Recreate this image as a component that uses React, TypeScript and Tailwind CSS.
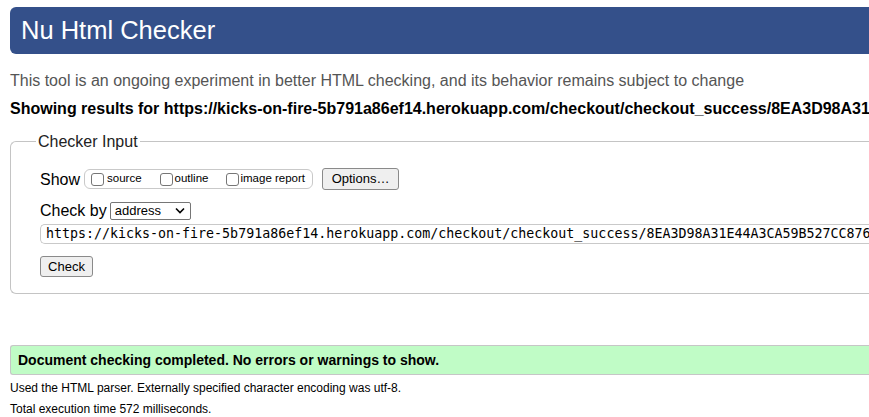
const url =
  "https://kicks-on-fire-5b791a86ef14.herokuapp.com/checkout/checkout_success/8EA3D98A31E44A3CA59B527CC8762F1D";

export default function App() {
  return (
    <div className="h-[417px] w-[869px] overflow-hidden bg-white font-['Liberation_Sans',Arial,sans-serif] text-black">
      <div className="w-[1200px] pl-[10px] pt-[7px]">
        <h1 className="flex h-[47px] items-center rounded-l-[6px] bg-[#34508a] pl-[11px] text-[25.5px] text-white">
          Nu Html Checker
        </h1>

        <p className="mt-[17px] text-[16px] leading-[19px] text-[#555]">
          This tool is an ongoing experiment in better HTML checking, and its behavior remains
          subject to change
        </p>
        <p className="mt-[9px] whitespace-nowrap text-[16px] font-bold leading-[19px]">
          Showing results for {url}
        </p>

        <fieldset className="mt-[14px] rounded-l-[6px] border border-r-0 border-[#c4c4c4] pb-[16px] pl-[29px] pt-[17px]">
          <legend className="-ml-[4px] px-[2px] text-[16px] leading-[19px] text-[#222]">
            Checker Input
          </legend>

          <div className="flex h-[22px] items-center">
            <span className="text-[16px] leading-[19px]">Show</span>
            <div className="ml-[4px] flex h-[20px] w-[229px] items-center rounded-[6px] border border-[#c9c9c9] pl-[6px] text-[11.5px]">
              <Box />
              <span className="ml-[3px]">source</span>
              <span className="ml-[18px] flex items-center">
                <Box />
                <span className="ml-[2px]">outline</span>
              </span>
              <span className="ml-[18px] flex items-center">
                <Box />
                <span className="ml-[1px]">image report</span>
              </span>
            </div>
            <button className="ml-[9px] h-[22px] w-[77px] rounded-[3px] border border-[#8a8a8a] bg-[#efefef] text-[13px]">
              Options…
            </button>
          </div>

          <div className="mt-[11px] flex h-[19px] items-center">
            <span className="text-[16px] leading-[19px]">Check by</span>
            <div className="ml-[3px] flex h-[18px] w-[81px] items-center justify-between rounded-[2px] border border-[#767676] pl-[4px] pr-[5px] text-[13px]">
              <span>address</span>
              <svg width="10" height="7" viewBox="0 0 10 7" fill="none">
                <path d="M1 1.5 5 5.5 9 1.5" stroke="#000" strokeWidth="1.6" />
              </svg>
            </div>
          </div>

          <div className="mt-[4px] flex h-[20px] items-center whitespace-nowrap rounded-l-[5px] border border-r-0 border-[#c9c9c9] pl-[5px] font-['DejaVu_Sans_Mono',monospace] text-[13.3px]">
            {url}
          </div>

          <button className="mt-[12px] block h-[21px] w-[53px] rounded-[3px] border border-[#8a8a8a] bg-[#efefef] text-[13px]">
            Check
          </button>
        </fieldset>

        <div className="mt-[51px] flex h-[30px] items-center rounded-l-[3px] border border-r-0 border-[#c6c6c6] bg-[#c0fcc6] pl-[7px] text-[14px] font-bold">
          Document checking completed. No errors or warnings to show.
        </div>

        <p className="mt-[6px] text-[12px] leading-[14px]">
          Used the HTML parser. Externally specified character encoding was utf-8.
        </p>
        <p className="mt-[7px] text-[12px] leading-[14px]">Total execution time 572 milliseconds.</p>
      </div>
    </div>
  );
}

function Box() {
  return <span className="inline-block h-[13px] w-[13px] rounded-[3px] border border-[#767676] bg-white" />;
}
